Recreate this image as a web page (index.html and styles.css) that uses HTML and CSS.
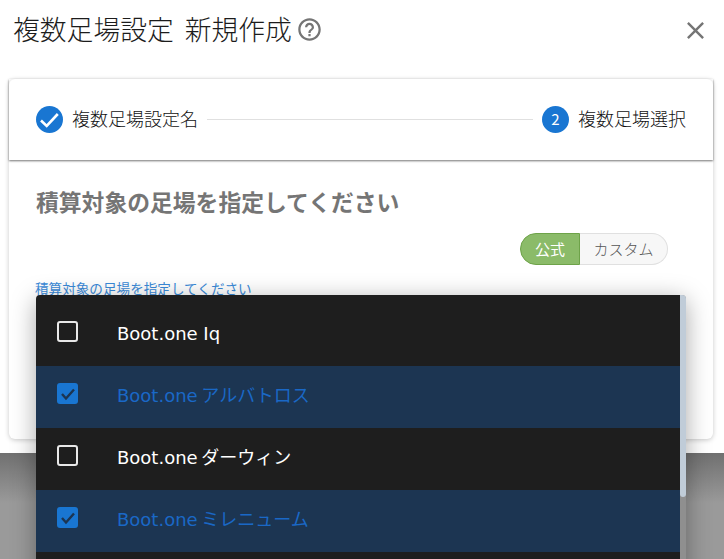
FILE: index.html
```html
<!DOCTYPE html>
<html lang="ja">
<head>
<meta charset="utf-8">
<title>複数足場設定 新規作成</title>
<link rel="stylesheet" href="styles.css">
</head>
<body>
<div class="dialog">
  <header class="dialog-head">
    <h1 class="title">複数足場設定 新規作成</h1>
    <svg class="help" viewBox="0 0 24 24" width="27" height="27"><path fill="#757575" d="M11 18h2v-2h-2v2zm1-16C6.48 2 2 6.48 2 12s4.48 10 10 10 10-4.48 10-10S17.52 2 12 2zm0 18c-4.41 0-8-3.59-8-8s3.59-8 8-8 8 3.59 8 8-3.59 8-8 8zm0-14c-2.21 0-4 1.79-4 4h2c0-1.1.9-2 2-2s2 .9 2 2c0 2-3 1.75-3 5h2c0-2.25 3-2.5 3-5 0-2.21-1.79-4-4-4z"/></svg>
    <svg class="close" viewBox="0 0 24 24" width="29" height="29"><path fill="#757575" d="M19 6.41 17.59 5 12 10.59 6.41 5 5 6.41 10.59 12 5 17.59 6.41 19 12 13.41 17.59 19 19 17.59 13.41 12z"/></svg>
  </header>
  <section class="card">
    <div class="stepper">
      <div class="step">
        <svg class="step-icon" viewBox="0 0 27 27" width="27" height="27"><circle cx="13.5" cy="13.5" r="13.5" fill="#1976d2"/><path d="M5 14.5l5.7 5.5L21.8 8" fill="none" stroke="#fff" stroke-width="2.6"/></svg>
        <span class="step-label">複数足場設定名</span>
      </div>
      <div class="step-line"></div>
      <div class="step">
        <span class="step-num">2</span>
        <span class="step-label">複数足場選択</span>
      </div>
    </div>
    <div class="card-body">
      <h2 class="heading">積算対象の足場を指定してください</h2>
      <div class="toggle-row">
        <div class="toggle">
          <span class="toggle-on">公式</span>
          <span class="toggle-off">カスタム</span>
        </div>
      </div>
      <div class="field-label">積算対象の足場を指定してください</div>
    </div>
  </section>
</div>
<div class="backdrop"></div>
<div class="menu">
  <div class="menu-list">
    <div class="item">
      <span class="box"></span>
      <span class="item-text">Boot.one Iq</span>
    </div>
    <div class="item selected">
      <span class="box box-checked"><svg viewBox="0 0 20 20" width="20" height="20"><path d="M4 10l4 4.5 8-9" fill="none" stroke="#1c3552" stroke-width="2.4"/></svg></span>
      <span class="item-text item-cjk">Boot.one アルバトロス</span>
    </div>
    <div class="item">
      <span class="box"></span>
      <span class="item-text item-cjk">Boot.one ダーウィン</span>
    </div>
    <div class="item selected">
      <span class="box box-checked"><svg viewBox="0 0 20 20" width="20" height="20"><path d="M4 10l4 4.5 8-9" fill="none" stroke="#1c3552" stroke-width="2.4"/></svg></span>
      <span class="item-text item-cjk">Boot.one ミレニューム</span>
    </div>
    <div class="item"></div>
  </div>
  <div class="scrollbar"><div class="thumb"></div></div>
</div>
</body>
</html>
```
FILE: styles.css
```css
* { box-sizing: border-box; }
html, body { height: 100%; }
body {
  margin: 0;
  overflow: hidden;
  position: relative;
  display: flex;
  flex-direction: column;
  background: #9a9a9a;
  font-family: "Noto Sans CJK JP", "Open Sans", sans-serif;
  font-weight: 300;
  color: #111;
}
.dialog {
  height: 453px;
  flex: none;
  background: #fff;
  padding: 0 11px 0 9px;
  position: relative;
}
.dialog-head {
  height: 79px;
  display: flex;
  align-items: flex-start;
  padding: 9px 0 0 4px;
}
.title {
  margin: 0;
  font-size: 26.8px;
  line-height: 40px;
  font-weight: 300;
  word-spacing: 5px;
  color: #1c1c1c;
  white-space: nowrap;
}
.help { margin: 7px 0 0 4px; }
.close { margin: 7px 3px 0 auto; }
.card {
  height: 360px;
  background: #fff;
  border-radius: 6px;
  box-shadow: 0 1px 5px rgba(0, 0, 0, .22);
}
.stepper {
  height: 81px;
  padding: 0 27px;
  display: flex;
  align-items: center;
  box-shadow: 0 1px 2px rgba(0, 0, 0, .55);
  position: relative;
}
.step { display: flex; align-items: center; gap: 9px; }
.step-label { font-size: 18px; line-height: 27px; white-space: nowrap; margin-bottom: 3px; }
.step-line { flex: 1; height: 1px; background: #e0e0e0; margin: 0 9px; }
.step-num {
  width: 27px;
  height: 27px;
  border-radius: 50%;
  background: #1976d2;
  color: #fff;
  font-size: 15px;
  font-weight: 400;
  line-height: 25px;
  text-align: center;
}
.card-body { padding: 24px 45px 0 27px; }
.heading {
  margin: 0;
  font-size: 22.8px;
  line-height: 36px;
  font-weight: 700;
  color: #757575;
  white-space: nowrap;
}
.toggle-row { display: flex; justify-content: flex-end; margin-top: 13px; }
.toggle { display: flex; height: 32px; font-size: 15px; line-height: 29px; }
.toggle-on {
  width: 60px;
  text-align: center;
  background: #8bbb69;
  border: 1px solid #6ea349;
  border-radius: 16px 0 0 16px;
  color: #fff;
  font-weight: 400;
}
.toggle-off {
  width: 88px;
  text-align: center;
  background: #f7f7f7;
  border: 1px solid #e0e0e0;
  border-left: 0;
  border-radius: 0 16px 16px 0;
  color: #555;
}
.field-label {
  margin-top: 13px;
  margin-left: -1px;
  font-size: 13.6px;
  line-height: 20px;
  font-weight: 400;
  color: #3a8ad8;
  white-space: nowrap;
}
.backdrop { flex: 1; background: linear-gradient(#707070, #9a9a9a 50px); }
.menu {
  position: absolute;
  left: 36px;
  top: 295px;
  width: 650px;
  height: 320px;
  display: flex;
  border-radius: 4px 4px 0 0;
  overflow: hidden;
  box-shadow: 0 5px 25px rgba(0, 0, 0, .35);
}
.menu-list { flex: 1; background: #1e1e1e; }
.item {
  height: 62px;
  display: flex;
  align-items: center;
  padding: 0 0 0 21px;
  color: #fff;
  font-size: 18px;
  font-family: "DejaVu Sans", "Noto Sans CJK JP", sans-serif;
  font-weight: 400;
}
.item:first-child { height: 71px; padding-top: 9px; }
.selected { background: #1c3552; color: #1a68c6; }
.box {
  width: 21px;
  height: 21px;
  border: 2px solid #e8e8e8;
  border-radius: 3px;
  flex: none;
  margin-top: -7px;
}
.box-checked { background: #1976d2; border: 0; padding: 0; display: flex; align-items: center; justify-content: center; }
.item-text { margin-left: 39px; white-space: nowrap; margin-bottom: 4px; }
.item-cjk { margin-bottom: 6px; word-spacing: -2px; }
.scrollbar { width: 6px; background: #8f8f8f; }
.thumb { height: 202px; background: #c0ccd8; border-radius: 0 0 3px 3px; }
```
